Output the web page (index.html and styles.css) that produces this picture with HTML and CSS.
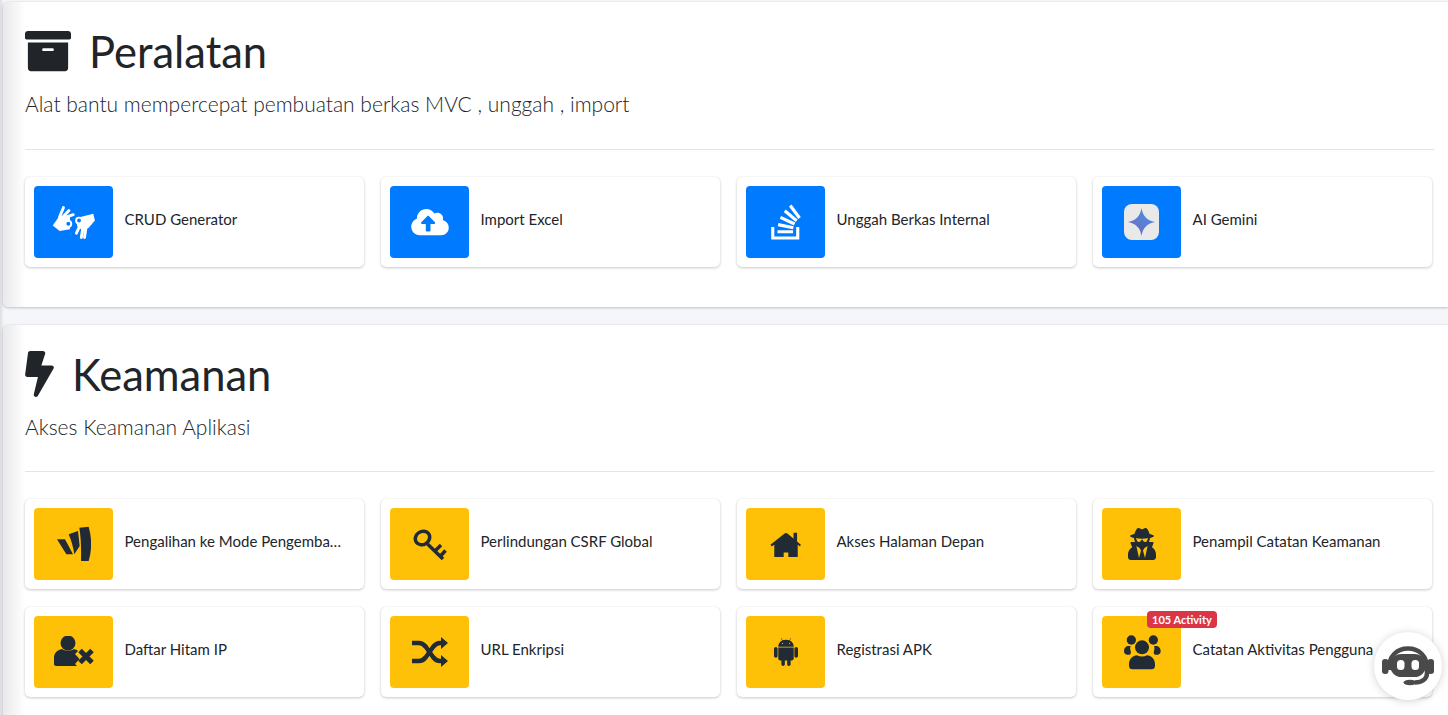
FILE: index.html
```html
<!DOCTYPE html>
<html lang="id">
<head>
<meta charset="utf-8">
<title>Peralatan</title>
<link rel="stylesheet" href="styles.css">
</head>
<body>
<main class="page">
  <section class="panel">
    <h1 class="title">
      <svg class="title-icon" width="46" height="46" viewBox="0 0 512 512"><path d="M32 448c0 17.7 14.3 32 32 32h384c17.7 0 32-14.3 32-32V160H32v288zm160-212c0-6.6 5.4-12 12-12h104c6.6 0 12 5.4 12 12v8c0 6.6-5.4 12-12 12H204c-6.6 0-12-5.4-12-12v-8zM480 32H32C14.3 32 0 46.3 0 64v48c0 8.8 7.2 16 16 16h480c8.8 0 16-7.2 16-16V64c0-17.7-14.3-32-32-32z"/></svg>
      <span>Peralatan</span>
    </h1>
    <p class="lead">Alat bantu mempercepat pembuatan berkas MVC , unggah , import</p>
    <hr class="rule">
    <div class="grid">
      <a class="card"><span class="tile tile-blue">
        <svg width="44" height="35" viewBox="95 85 135 108"><path d="M97 148l21-30 32 4v38l-32 5z"/><path d="M170 125l52-13 5 21-19 22-18 10-18-15z"/><g fill="none" stroke="#fff" stroke-width="9" stroke-linecap="round"><path d="M118 122l12-29M128 122l19-20M140 122l20-7M190 155l-5 30M180 150l-10 22M200 150l-5 35"/></g><g fill="#007bff" stroke="#fff" stroke-width="6"><circle cx="145" cy="143" r="9"/><circle cx="178" cy="133" r="9"/></g></svg>
      </span><span class="label">CRUD Generator</span></a>
      <a class="card"><span class="tile tile-blue">
        <svg width="38" height="30" viewBox="0 0 640 512"><path d="M537.600 226.600c4.100-10.700 6.400-22.400 6.400-34.600 0-53-43-96-96-96-19.700 0-38.100 6-53.300 16.200C367 64.200 315.300 32 256 32c-88.400 0-160 71.600-160 160 0 2.700.1 5.400.2 8.100C40.200 219.800 0 273.200 0 336c0 79.500 64.500 144 144 144h368c70.700 0 128-57.300 128-128 0-61.900-44-113.600-102.400-125.400zM393.400 288H328v112c0 8.800-7.200 16-16 16h-48c-8.800 0-16-7.200-16-16V288h-65.400c-14.300 0-21.400-17.200-11.300-27.300l105.400-105.400c6.200-6.200 16.400-6.200 22.600 0l105.400 105.400c10.100 10.100 2.900 27.300-11.300 27.300z"/></svg>
      </span><span class="label">Import Excel</span></a>
      <a class="card"><span class="tile tile-blue">
        <svg width="30" height="40" viewBox="0 0 384 512"><path d="M290.700 311 95 269.700 86.800 309l195.700 41zm51-87L188.200 95.700l-25.500 30.800 153.500 128.300zm-31.200 39.700L129.200 179l-16.700 36.500L293.700 300zM262 32l-32 24 119.300 160.300 32-24zm20.500 328h-200v39.700h200zm39.700 80H42.700V320h-40v160h359.500V320h-40z"/></svg>
      </span><span class="label">Unggah Berkas Internal</span></a>
      <a class="card"><span class="tile tile-blue">
        <svg width="35" height="36" viewBox="0 0 35 36"><defs><linearGradient id="gem" x1="0" y1="1" x2="1" y2="0"><stop offset="0" stop-color="#7b62c4"/><stop offset="1" stop-color="#3f9be0"/></linearGradient></defs><rect width="35" height="36" rx="8" fill="#e9e9ea"/><path fill="url(#gem)" d="M17.500 4c1.200 7.800 5.400 12.500 13.500 14-8.100 1.500-12.300 6.200-13.500 14C16.300 24.200 12.100 19.500 4 18c8.100-1.500 12.300-6.200 13.500-14z"/></svg>
      </span><span class="label">AI Gemini</span></a>
    </div>
  </section>

  <section class="panel">
    <h1 class="title">
      <svg class="title-icon" width="29" height="46" viewBox="0 0 320 512"><path d="M296 160H180.600l42.600-129.800C227.200 15 215.700 0 200 0H56C44 0 33.800 8.900 32.200 20.800l-32 240C-1.700 275.200 9.500 288 24 288h118.700L96.600 482.500c-3.600 15.200 8 29.500 23.300 29.500 8.400 0 16.400-4.400 20.800-12l176-304c9.300-15.900-2.200-36-20.700-36z"/></svg>
      <span>Keamanan</span>
    </h1>
    <p class="lead">Akses Keamanan Aplikasi</p>
    <hr class="rule">
    <div class="grid">
      <a class="card"><span class="tile tile-amber">
        <svg width="35" height="36" viewBox="80 60 105 108"><path d="M83 100h24l24 45h-20z"/><path d="M118 85l28-10 5 45-16 25c-3-22-9-41-17-60z"/><path d="M150 65l28-3c10 35 10 70 0 103h-23c1-35 0-70-5-100z"/></svg>
      </span><span class="label">Pengalihan ke Mode Pengembangan Aplikasi</span></a>
      <a class="card"><span class="tile tile-amber">
        <svg width="34" height="31" viewBox="0 0 34 31"><g fill="none" stroke="#212b36" stroke-width="3.500"><ellipse cx="9.500" cy="9" rx="7.500" ry="6.500" transform="rotate(-35 9.500 9)"/><path d="M14.500 15 30 30M23 21l5-5M28 26.500l4.500-5"/></g></svg>
      </span><span class="label">Perlindungan CSRF Global</span></a>
      <a class="card"><span class="tile tile-amber">
        <svg width="32" height="26" viewBox="0 0 576 470"><path d="M288 60 76 238v220a14 14 0 0 0 14 14h156V390h84v82h156a14 14 0 0 0 14-14V238zM556 248l-68-57V32h-64v104L318 48a48 48 0 0 0-61 0L6 248l28 32L288 72l254 208z"/></svg>
      </span><span class="label">Akses Halaman Depan</span></a>
      <a class="card"><span class="tile tile-amber">
        <svg width="28" height="32" viewBox="0 0 448 512"><path d="M383.900 308.300l23.900-62.600c4-10.500-3.700-21.700-15-21.700h-58.500c11-18.900 17.800-40.600 17.800-64v-.3c39.200-7.800 64-19.100 64-31.700 0-13.300-27.300-25.100-70.100-33-9.200-32.800-27-65.800-40.600-82.800-9.500-11.900-25.900-15.600-39.500-8.800l-27.600 13.800c-9 4.500-19.600 4.500-28.600 0L182.100 3.400c-13.600-6.800-30-3.100-39.500 8.800-13.500 17-31.400 50-40.600 82.800-42.700 7.900-70 19.700-70 33 0 12.600 24.800 23.900 64 31.700v.3c0 23.400 6.800 45.100 17.800 64H56.300c-11.500 0-19.200 11.700-14.700 22.300l25.800 60.200C27.300 329.800 0 372.700 0 422.400v44.800C0 491.900 20.100 512 44.800 512h358.400c24.700 0 44.800-20.100 44.800-44.800v-44.800c0-48.400-25.800-90.400-64.100-114.100zM176 480l-41.600-192 49.600 32 24 40-32 120zm96 0l-32-120 24-40 49.600-32L272 480zm41.700-298.500c-3.900 11.900-7 24.600-16.500 33.400-10.100 9.300-48 22.400-64-25-2.800-8.400-15.400-8.400-18.300 0-17 50.200-56 32.400-64 25-9.500-8.800-12.700-21.500-16.500-33.400-.8-2.500-6.300-5.700-6.300-5.800v-10.800c28.300 3.600 61 5.800 96 5.800s67.700-2.100 96-5.800v10.800c-.1.100-5.600 3.200-6.400 5.800z"/></svg>
      </span><span class="label">Penampil Catatan Keamanan</span></a>

      <a class="card"><span class="tile tile-amber">
        <svg width="40" height="32" viewBox="0 1 40 32"><circle cx="14" cy="8" r="7.500"/><path d="M0 29v-6c0-5 3-8 8-9 3 2 9 2 12 0 2 .5 3 1 4 2l-3 3 4.500 5-4.500 5 2 2H2c-1 0-2-1-2-2z"/><path d="M26 15.500 38 27.500M38 15.500 26 27.500" fill="none" stroke="#212b36" stroke-width="5"/></svg>
      </span><span class="label">Daftar Hitam IP</span></a>
      <a class="card"><span class="tile tile-amber">
        <svg width="36" height="30" viewBox="0 0 36 30"><path d="M0 6h7c3 0 5 1.500 7 4l7 10c2 2.500 4 4 7 4h3M0 24h7c3 0 5-1.500 7-4l7-10c2-2.500 4-4 7-4h3" fill="none" stroke="#212b36" stroke-width="4.500"/><path d="M29 0l7 6-7 6zM29 18l7 6-7 6z"/></svg>
      </span><span class="label">URL Enkripsi</span></a>
      <a class="card"><span class="tile tile-amber">
        <svg width="28" height="32" viewBox="0 0 448 512"><path d="M89.600 204.500v115.800c0 15.400-12.100 27.700-27.500 27.700-15.300 0-30.100-12.400-30.100-27.700V204.500c0-15.100 14.800-27.500 30.100-27.500 15.100 0 27.500 12.400 27.500 27.500zm10.800 157c0 16.400 13.200 29.600 29.600 29.600h19.900l.3 61.100c0 36.900 55.200 36.600 55.200 0v-61.100h37.200v61.100c0 36.700 55.500 36.800 55.500 0v-61.100h20.200c16.200 0 29.400-13.200 29.400-29.600V182.100H100.400v179.400zm248-189.100H99.300c0-42.800 25.600-80 63.600-99.400l-19.100-35.300c-2.800-4.900 4.300-8 6.700-3.800l19.400 35.600c34.900-15.500 75-14.700 108.300 0L297.500 34c2.500-4.300 9.500-1.100 6.700 3.800L285.100 73c37.700 19.400 63.300 56.600 63.300 99.400zm-170.700-55.500c0-5.700-4.600-10.500-10.500-10.500-5.700 0-10.200 4.800-10.200 10.500s4.600 10.500 10.200 10.500c5.900 0 10.500-4.800 10.500-10.500zm113.400 0c0-5.700-4.600-10.500-10.200-10.500-5.900 0-10.500 4.800-10.500 10.500s4.600 10.500 10.500 10.500c5.600 0 10.200-4.800 10.200-10.500zm94.800 60.100c-15.100 0-27.500 12.100-27.500 27.500v116.100c0 15.400 12.400 27.700 27.500 27.700 15.400 0 30.100-12.400 30.100-27.700V204.500c0-15.400-14.800-27.500-30.100-27.500z"/></svg>
      </span><span class="label">Registrasi APK</span></a>
      <a class="card"><span class="badge">105 Activity</span><span class="tile tile-amber">
        <svg width="38" height="35" viewBox="100 85 112 105"><circle cx="124" cy="100" r="14"/><circle cx="190" cy="100" r="14"/><path d="M102 133c0-9 6-15 14-15h6c-2 4-2 9 0 14 2 5 0 13-4 12h-7c-6 0-9-5-9-11z"/><path d="M212 133c0-9-6-15-14-15h-6c2 4 2 9 0 14-2 5 0 13 4 12h7c6 0 9-5 9-11z"/><circle cx="156" cy="122" r="21"/><path d="M117 172c0-14 12-26 24-26 9 5 21 5 30 0 12 0 24 12 24 26v6c0 6-4 10-10 10h-58c-6 0-10-4-10-10z"/></svg>
      </span><span class="label">Catatan Aktivitas Pengguna</span></a>
    </div>
  </section>
</main>
<button class="bot" type="button" aria-label="Chat">
  <svg width="52" height="40" viewBox="0 0 52 40"><path d="M7 24V22C7 10 15 2.500 26 2.500S45 10 45 22v5c0 6-5 9.500-12 9.500" fill="none" stroke="#4a4a4a" stroke-width="4.500"/><rect y="13" width="6.500" height="15" rx="3"/><rect x="45.500" y="13" width="6.500" height="15" rx="3"/><ellipse cx="28" cy="36.500" rx="6.500" ry="2.800"/><rect x="8" y="8" width="36" height="23" rx="11.500"/><rect x="15" y="14" width="7.500" height="10" rx="3.500" fill="#fff"/><rect x="29.500" y="14" width="7.500" height="10" rx="3.500" fill="#fff"/></svg>
</button>
</body>
</html>
```

FILE: styles.css
```css
* { box-sizing: border-box; }

html, body {
  margin: 0;
  height: 100%;
  overflow: hidden;
}

body {
  background: linear-gradient(90deg, #dcdde0 0, #f4f6f9 4px);
  color: #212529;
  font-family: "Lato", "Liberation Sans", sans-serif;
}

.page {
  padding: 2px 0 0 3px;
}

.panel {
  margin-bottom: 18px;
  padding: 26px 15px 40px 22px;
  background: linear-gradient(90deg, #e9e9eb 0, #ffffff 22px);
  border-radius: 5px 0 0 5px;
  box-shadow: 0 0 1px rgba(0, 0, 0, .2), 0 1px 3px rgba(0, 0, 0, .2);
}

.title {
  display: flex;
  align-items: center;
  gap: 18px;
  height: 46px;
  margin: 0;
  font-size: 43.500px;
  font-weight: 400;
  line-height: 46px;
}

.title-icon {
  flex: none;
  fill: #212529;
}

.lead {
  margin: 16px 0 0;
  font-size: 21px;
  font-weight: 300;
  line-height: 28px;
}

.rule {
  margin: 31px -1px 27px 0;
  border: 0;
  border-top: 1px solid #e3e4e6;
}

.panel + .panel .rule {
  margin-top: 30px;
}

.grid {
  display: grid;
  grid-template-columns: repeat(4, 339px);
  gap: 18px 17px;
}

.card {
  position: relative;
  display: flex;
  align-items: center;
  height: 90px;
  padding: 9px;
  background: #fff;
  border-radius: 5px;
  box-shadow: 0 0 1px rgba(0, 0, 0, .125), 0 1px 3px rgba(0, 0, 0, .2);
}

.tile {
  flex: none;
  display: flex;
  align-items: center;
  justify-content: center;
  width: 79px;
  height: 72px;
  border-radius: 4px;
}

.tile-blue { background: #007bff; fill: #fff; }
.tile-amber { background: #ffc107; fill: #212b36; }

.label {
  min-width: 0;
  padding: 0 10px 7px 11.500px;
  overflow: hidden;
  font-size: 15px;
  line-height: 20px;
  white-space: nowrap;
  text-overflow: ellipsis;
}

.badge {
  position: absolute;
  top: 4px;
  left: 54px;
  padding: 0 5px;
  background: #dc3545;
  border-radius: 4px;
  color: #fff;
  font-size: 11px;
  font-weight: 700;
  line-height: 17px;
}

.bot {
  position: fixed;
  right: 6px;
  bottom: 15px;
  display: flex;
  align-items: center;
  justify-content: center;
  width: 68px;
  height: 68px;
  padding: 0;
  background: #fff;
  border: 0;
  border-radius: 50%;
  box-shadow: 0 1px 8px rgba(0, 0, 0, .18);
  fill: #4a4a4a;
}
```
